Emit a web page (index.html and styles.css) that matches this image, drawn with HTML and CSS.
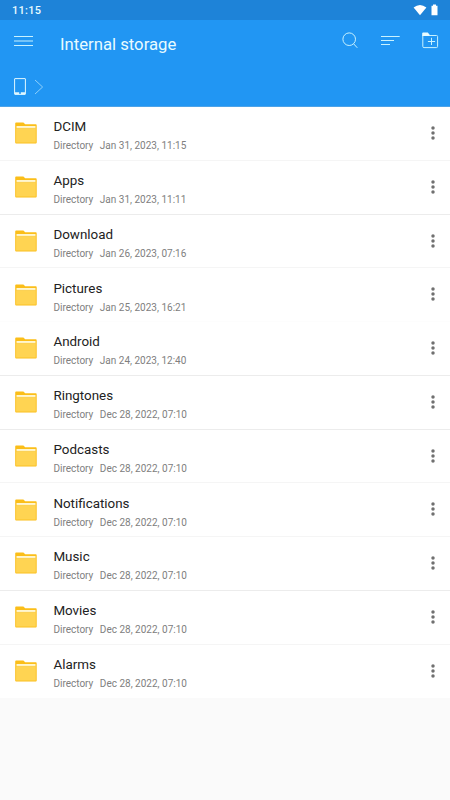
FILE: index.html
```html
<!DOCTYPE html>
<html lang="en">
<head>
<meta charset="utf-8">
<title>Internal storage</title>
<link rel="stylesheet" href="styles.css">
</head>
<body>
<svg class="defs" aria-hidden="true">
  <symbol id="folder" viewBox="0 0 22 22">
    <path d="M0.2 1.4Q0.2 0.5 1.1 0.5H8.4L10.2 2.3H20.8Q21.7 2.3 21.7 3.2V20.6Q21.7 21.5 20.8 21.5H1.1Q0.2 21.5 0.2 20.6Z" fill="#fbbe19"/>
    <path d="M1.5 4H20.5V7H1.5Z" fill="#fff6cf"/>
    <path d="M1.1 6.5H20.8V20.6H1.1Z" fill="#ffd452"/>
    <path d="M1 6.4H20.9" stroke="#f9c532" stroke-width=".7"/>
  </symbol>
  <symbol id="more" viewBox="0 0 6 16">
    <g fill="#707070"><circle cx="3" cy="3" r="1.75"/><circle cx="3" cy="8" r="1.75"/><circle cx="3" cy="13" r="1.75"/></g>
  </symbol>
</svg>
<header class="header">
  <div class="status">
    <span class="clock">11:15</span>
    <svg class="wifi" viewBox="0 0 14 12"><path d="M0.6 3.5Q7-1.7 13.4 3.5L7 11.3Z"/></svg>
    <svg class="battery" viewBox="0 0 7 12"><path d="M2 .6H5V1.8H6.5V11.2H.5V1.8H2Z"/></svg>
  </div>
  <div class="toolbar">
    <svg class="menu" viewBox="0 0 20 12"><path d="M0 1.5H19M0 6H19M0 10.5H19"/></svg>
    <h1 class="title">Internal storage</h1>
    <svg class="search" viewBox="0 0 16 17"><circle cx="7.2" cy="7.2" r="6.3"/><path d="M11.6 11.8L15.3 15.8"/></svg>
    <svg class="sort" viewBox="0 0 20 12"><path d="M0 1.5H18.7M0 5.5H13M0 9.5H9"/></svg>
    <svg class="add" viewBox="0 0 17 17"><path d="M.8 3.5H14.6Q15.6 3.5 15.6 4.5V14.4Q15.6 15.6 14.4 15.6H2Q.8 15.6 .8 14.4ZM5.9 9.5H13.1M9.5 5.8V13"/><path class="tab" d="M.2 4V1.4Q.2.5 1.1.5H5.8L7.4 2.6V4Z"/></svg>
  </div>
  <div class="crumbs">
    <svg class="phone" viewBox="0 0 12 17"><rect x=".6" y=".6" width="10.8" height="15.8" rx=".3"/><path d="M1 15.2H5.2M6.8 15.2H11" stroke-width="2"/></svg>
    <svg class="chevron" viewBox="0 0 10 16"><path d="M1 1L8.6 8L1 15"/></svg>
  </div>
</header>
<main class="list">
  <div class="row"><svg class="folder"><use href="#folder"/></svg><div class="info"><div class="name">DCIM</div><div class="meta"><span>Directory</span><span>Jan 31, 2023, 11:15</span></div></div><svg class="more"><use href="#more"/></svg></div>
  <div class="row strong"><svg class="folder"><use href="#folder"/></svg><div class="info"><div class="name">Apps</div><div class="meta"><span>Directory</span><span>Jan 31, 2023, 11:11</span></div></div><svg class="more"><use href="#more"/></svg></div>
  <div class="row"><svg class="folder"><use href="#folder"/></svg><div class="info"><div class="name">Download</div><div class="meta"><span>Directory</span><span>Jan 26, 2023, 07:16</span></div></div><svg class="more"><use href="#more"/></svg></div>
  <div class="row faint"><svg class="folder"><use href="#folder"/></svg><div class="info"><div class="name">Pictures</div><div class="meta"><span>Directory</span><span>Jan 25, 2023, 16:21</span></div></div><svg class="more"><use href="#more"/></svg></div>
  <div class="row strong"><svg class="folder"><use href="#folder"/></svg><div class="info"><div class="name">Android</div><div class="meta"><span>Directory</span><span>Jan 24, 2023, 12:40</span></div></div><svg class="more"><use href="#more"/></svg></div>
  <div class="row strong"><svg class="folder"><use href="#folder"/></svg><div class="info"><div class="name">Ringtones</div><div class="meta"><span>Directory</span><span>Dec 28, 2022, 07:10</span></div></div><svg class="more"><use href="#more"/></svg></div>
  <div class="row"><svg class="folder"><use href="#folder"/></svg><div class="info"><div class="name">Podcasts</div><div class="meta"><span>Directory</span><span>Dec 28, 2022, 07:10</span></div></div><svg class="more"><use href="#more"/></svg></div>
  <div class="row"><svg class="folder"><use href="#folder"/></svg><div class="info"><div class="name">Notifications</div><div class="meta"><span>Directory</span><span>Dec 28, 2022, 07:10</span></div></div><svg class="more"><use href="#more"/></svg></div>
  <div class="row strong"><svg class="folder"><use href="#folder"/></svg><div class="info"><div class="name">Music</div><div class="meta"><span>Directory</span><span>Dec 28, 2022, 07:10</span></div></div><svg class="more"><use href="#more"/></svg></div>
  <div class="row"><svg class="folder"><use href="#folder"/></svg><div class="info"><div class="name">Movies</div><div class="meta"><span>Directory</span><span>Dec 28, 2022, 07:10</span></div></div><svg class="more"><use href="#more"/></svg></div>
  <div class="row"><svg class="folder"><use href="#folder"/></svg><div class="info"><div class="name">Alarms</div><div class="meta"><span>Directory</span><span>Dec 28, 2022, 07:10</span></div></div><svg class="more"><use href="#more"/></svg></div>
</main>
</body>
</html>
```
FILE: styles.css
```css
* { box-sizing: border-box; }
body { margin: 0; height: 800px; overflow: hidden; background: #fafafa; font-family: Roboto, "Liberation Sans", sans-serif; }
svg { display: block; flex: none; }
.defs { display: none; }
.header { height: 107px; background: #2196f3; border-bottom: 1px solid #4da3e8; color: #e8fbff; }
.status { height: 20px; background: #1e83d8; display: flex; align-items: center; padding: 0 12px 0 12px; }
.clock { flex: 1; font-size: 11px; font-weight: 500; line-height: 20px; letter-spacing: .25px; padding-top: 1px; }
.wifi { width: 14px; height: 12px; margin-right: 4px; fill: #fff; }
.battery { width: 7px; height: 12px; fill: #fff; }
.toolbar { height: 48px; display: flex; align-items: flex-start; padding-left: 14px; }
.toolbar svg, .crumbs svg { fill: none; stroke: #c8f2ff; stroke-width: 1; }
.toolbar .menu { width: 20px; height: 12px; margin-top: 14.5px; }
.title { flex: 1; margin: 0 0 0 26px; font-size: 16.7px; font-weight: 400; line-height: 49px; }
.search { width: 16px; height: 17px; margin: 12px 23px 0 0; }
.sort { width: 20px; height: 12px; margin: 15px 21px 0 0; }
.add { width: 17px; height: 17px; margin: 12px 11px 0 0; }
.add .tab { fill: #e8fbff; stroke: none; }
.crumbs { display: flex; align-items: center; padding: 10px 0 0 13.5px; gap: 8px; }
.crumbs .phone { width: 12px; height: 17px; stroke: #e0f8ff; }
.crumbs .chevron { width: 10px; height: 16px; stroke: #8fd0fb; }
.list { height: 591.25px; background: #fff; }
.row { height: 53.75px; display: flex; align-items: flex-start; padding: 0 13.7px 0 15px; border-bottom: 1px solid #f5f5f5; }
.row.strong { border-bottom-color: #ececec; }
.row.faint { border-bottom-color: #fdfdfd; }
.row:last-child { border-bottom: 0; }
.folder { width: 22px; height: 22px; margin-top: 15.3px; }
.info { flex: 1; margin-left: 16.4px; padding-top: 11.3px; }
.name { font-size: 13.4px; line-height: 18px; color: #222; }
.meta { display: flex; gap: 6.5px; margin-top: 4px; font-size: 10px; line-height: 12px; color: #808080; }
.more { width: 6px; height: 16px; margin-top: 18.2px; }
```
